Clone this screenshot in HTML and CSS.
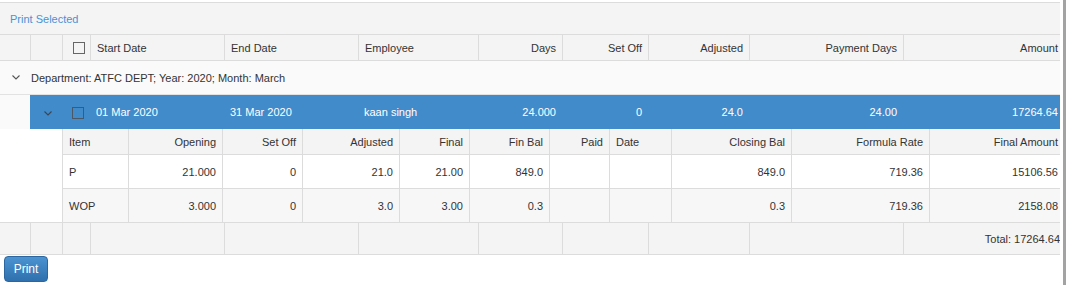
FILE: index.html
```html
<!DOCTYPE html>
<html lang="en">

<head>
    <meta charset="UTF-8">
    <meta name="viewport" content="width=device-width, initial-scale=1.0">
    <title>Leave Payment</title>
    <link rel="stylesheet" href="styles.css">
</head>

<body>
    <div class="page">
        <div class="main">
            <div class="grid">
                <div class="toolbar">
                    <a href="#" class="print-selected">Print Selected</a>
                </div>
                <table class="master">
                    <colgroup>
                        <col style="width: 30px">
                        <col style="width: 32px">
                        <col style="width: 28px">
                        <col style="width: 134px">
                        <col style="width: 134px">
                        <col style="width: 120px">
                        <col style="width: 84px">
                        <col style="width: 86px">
                        <col style="width: 101px">
                        <col style="width: 154px">
                        <col style="width: 157px">
                    </colgroup>
                    <thead>
                        <tr>
                            <th class="first"></th>
                            <th></th>
                            <th class="check-cell"><span class="checkbox"></span></th>
                            <th>Start Date</th>
                            <th>End Date</th>
                            <th>Employee</th>
                            <th class="num">Days</th>
                            <th class="num">Set Off</th>
                            <th class="num">Adjusted</th>
                            <th class="num">Payment Days</th>
                            <th class="num last">Amount</th>
                        </tr>
                    </thead>
                    <tbody>
                        <tr class="group-row">
                            <td colspan="11">
                                <span class="chevron">
                                    <svg width="8" height="5" viewBox="0 0 8 5"><polyline points="0.5,0.5 4,4 7.5,0.5" /></svg>
                                </span>
                                Department: ATFC DEPT; Year: 2020; Month: March
                            </td>
                        </tr>
                        <tr class="master-row">
                            <td class="indent"></td>
                            <td class="expand-cell">
                                <span class="chevron">
                                    <svg width="8" height="5" viewBox="0 0 8 5"><polyline points="0.5,0.5 4,4 7.5,0.5" /></svg>
                                </span>
                            </td>
                            <td class="check-cell"><span class="checkbox"></span></td>
                            <td>01 Mar 2020</td>
                            <td>31 Mar 2020</td>
                            <td>kaan singh</td>
                            <td class="num">24.000</td>
                            <td class="num">0</td>
                            <td class="num">24.0</td>
                            <td class="num">24.00</td>
                            <td class="num last">17264.64</td>
                        </tr>
                        <tr class="detail-row">
                            <td class="indent"></td>
                            <td class="indent"></td>
                            <td colspan="9" class="detail-cell">
                                <table class="detail">
                                    <colgroup>
                                        <col style="width: 65px">
                                        <col style="width: 94px">
                                        <col style="width: 80px">
                                        <col style="width: 97px">
                                        <col style="width: 70px">
                                        <col style="width: 80px">
                                        <col style="width: 60px">
                                        <col style="width: 62px">
                                        <col style="width: 120px">
                                        <col style="width: 138px">
                                        <col style="width: 131px">
                                    </colgroup>
                                    <thead>
                                        <tr>
                                            <th>Item</th>
                                            <th class="num">Opening</th>
                                            <th class="num">Set Off</th>
                                            <th class="num">Adjusted</th>
                                            <th class="num">Final</th>
                                            <th class="num">Fin Bal</th>
                                            <th class="num">Paid</th>
                                            <th>Date</th>
                                            <th class="num">Closing Bal</th>
                                            <th class="num">Formula Rate</th>
                                            <th class="num last">Final Amount</th>
                                        </tr>
                                    </thead>
                                    <tbody>
                                        <tr>
                                            <td>P</td>
                                            <td class="num">21.000</td>
                                            <td class="num">0</td>
                                            <td class="num">21.0</td>
                                            <td class="num">21.00</td>
                                            <td class="num">849.0</td>
                                            <td></td>
                                            <td></td>
                                            <td class="num">849.0</td>
                                            <td class="num">719.36</td>
                                            <td class="num last">15106.56</td>
                                        </tr>
                                        <tr class="alt">
                                            <td>WOP</td>
                                            <td class="num">3.000</td>
                                            <td class="num">0</td>
                                            <td class="num">3.0</td>
                                            <td class="num">3.00</td>
                                            <td class="num">0.3</td>
                                            <td></td>
                                            <td></td>
                                            <td class="num">0.3</td>
                                            <td class="num">719.36</td>
                                            <td class="num last">2158.08</td>
                                        </tr>
                                    </tbody>
                                </table>
                            </td>
                        </tr>
                    </tbody>
                    <tfoot>
                        <tr>
                            <td class="first"></td>
                            <td></td>
                            <td></td>
                            <td></td>
                            <td></td>
                            <td></td>
                            <td></td>
                            <td></td>
                            <td></td>
                            <td></td>
                            <td class="num total">Total: 17264.64</td>
                        </tr>
                    </tfoot>
                </table>
            </div>
            <button type="button" class="print-btn">Print</button>
        </div>
        <div class="scroll-track"></div>
    </div>
</body>

</html>
```

FILE: styles.css
```css
body {
    font-family: "Liberation Sans", Arial, sans-serif;
    font-size: 11px;
    color: #333;
    background-color: white;
    margin: 0;
    padding: 0;
}

.page {
    display: flex;
    height: 285px;
    overflow: hidden;
}

.main {
    width: 1060px;
}

.scroll-track {
    width: 3px;
    margin-left: auto;
    background-color: #a3a3a3;
}

.grid {
    margin-top: 2px;
    border-top: 1px solid #dcdcdc;
}

.toolbar {
    height: 31px;
    background-color: #f4f4f4;
    display: flex;
    align-items: center;
    padding-left: 10px;
    padding-top: 1px;
    box-sizing: border-box;
}

.print-selected {
    color: #4a92d4;
    text-decoration: none;
}

table {
    border-collapse: separate;
    border-spacing: 0;
    table-layout: fixed;
    width: 100%;
}

th,
td {
    padding: 0 6px;
    text-align: left;
    font-weight: normal;
    white-space: nowrap;
    overflow: hidden;
}

.num {
    text-align: right;
}

th.last,
td.last {
    padding-right: 2px;
}

td.total {
    padding-right: 0;
}

.check-cell {
    padding: 0 0 0 10px;
}

.expand-cell {
    padding: 0 0 0 14px;
}

/* master grid */
.master > thead th {
    height: 25px;
    background-color: #f4f4f4;
    border-top: 1px solid #dcdcdc;
    border-bottom: 1px solid #dcdcdc;
    border-left: 1px solid #dcdcdc;
}

.master > thead th.first,
.master > tfoot td.first {
    border-left: none;
}

.checkbox {
    display: inline-block;
    width: 10px;
    height: 10px;
    border: 1px solid #666;
    vertical-align: middle;
}

.chevron {
    display: inline-block;
    vertical-align: middle;
}

.chevron svg {
    display: block;
}

.chevron polyline {
    fill: none;
    stroke: #555;
    stroke-width: 1.1;
}

.group-row td {
    height: 33px;
    background-color: #fafafa;
    border-bottom: 1px solid #e2e2e2;
    padding-left: 12px;
}

.group-row .chevron {
    margin-right: 8px;
    margin-top: -2px;
}

.master-row td {
    height: 34px;
    background-color: #428bca;
    color: white;
}

.master-row td.indent {
    background-color: #fafafa;
}

.master-row .checkbox {
    border-color: #4a5866;
}

.master-row .chevron polyline {
    stroke: #3a4654;
}

.detail-row td.indent {
    background-color: white;
}

.detail-cell {
    padding: 0;
    border-left: 1px solid #dcdcdc;
}

.detail th {
    height: 25px;
    background-color: #f4f4f4;
    border-bottom: 1px solid #dcdcdc;
    border-left: 1px solid #dcdcdc;
}

.detail th:first-child,
.detail td:first-child {
    border-left: none;
}

.detail td {
    height: 33px;
    background-color: white;
    border-bottom: 1px solid #dcdcdc;
    border-left: 1px solid #dcdcdc;
}

.detail tr.alt td {
    background-color: #f7f7f7;
}

.detail tr:last-child td {
    border-bottom: none;
}

.master > tfoot td {
    height: 31px;
    background-color: #f4f4f4;
    border-top: 1px solid #dcdcdc;
    border-bottom: 1px solid #dcdcdc;
    border-left: 1px solid #dcdcdc;
}

.print-btn {
    display: block;
    margin: 1px 0 0 4px;
    width: 44px;
    height: 26px;
    padding: 0;
    font-family: inherit;
    font-size: 12px;
    color: white;
    background: linear-gradient(#4b93d1, #2f70ae);
    border: 1px solid #2b66a0;
    border-radius: 4px;
    cursor: pointer;
}
```
